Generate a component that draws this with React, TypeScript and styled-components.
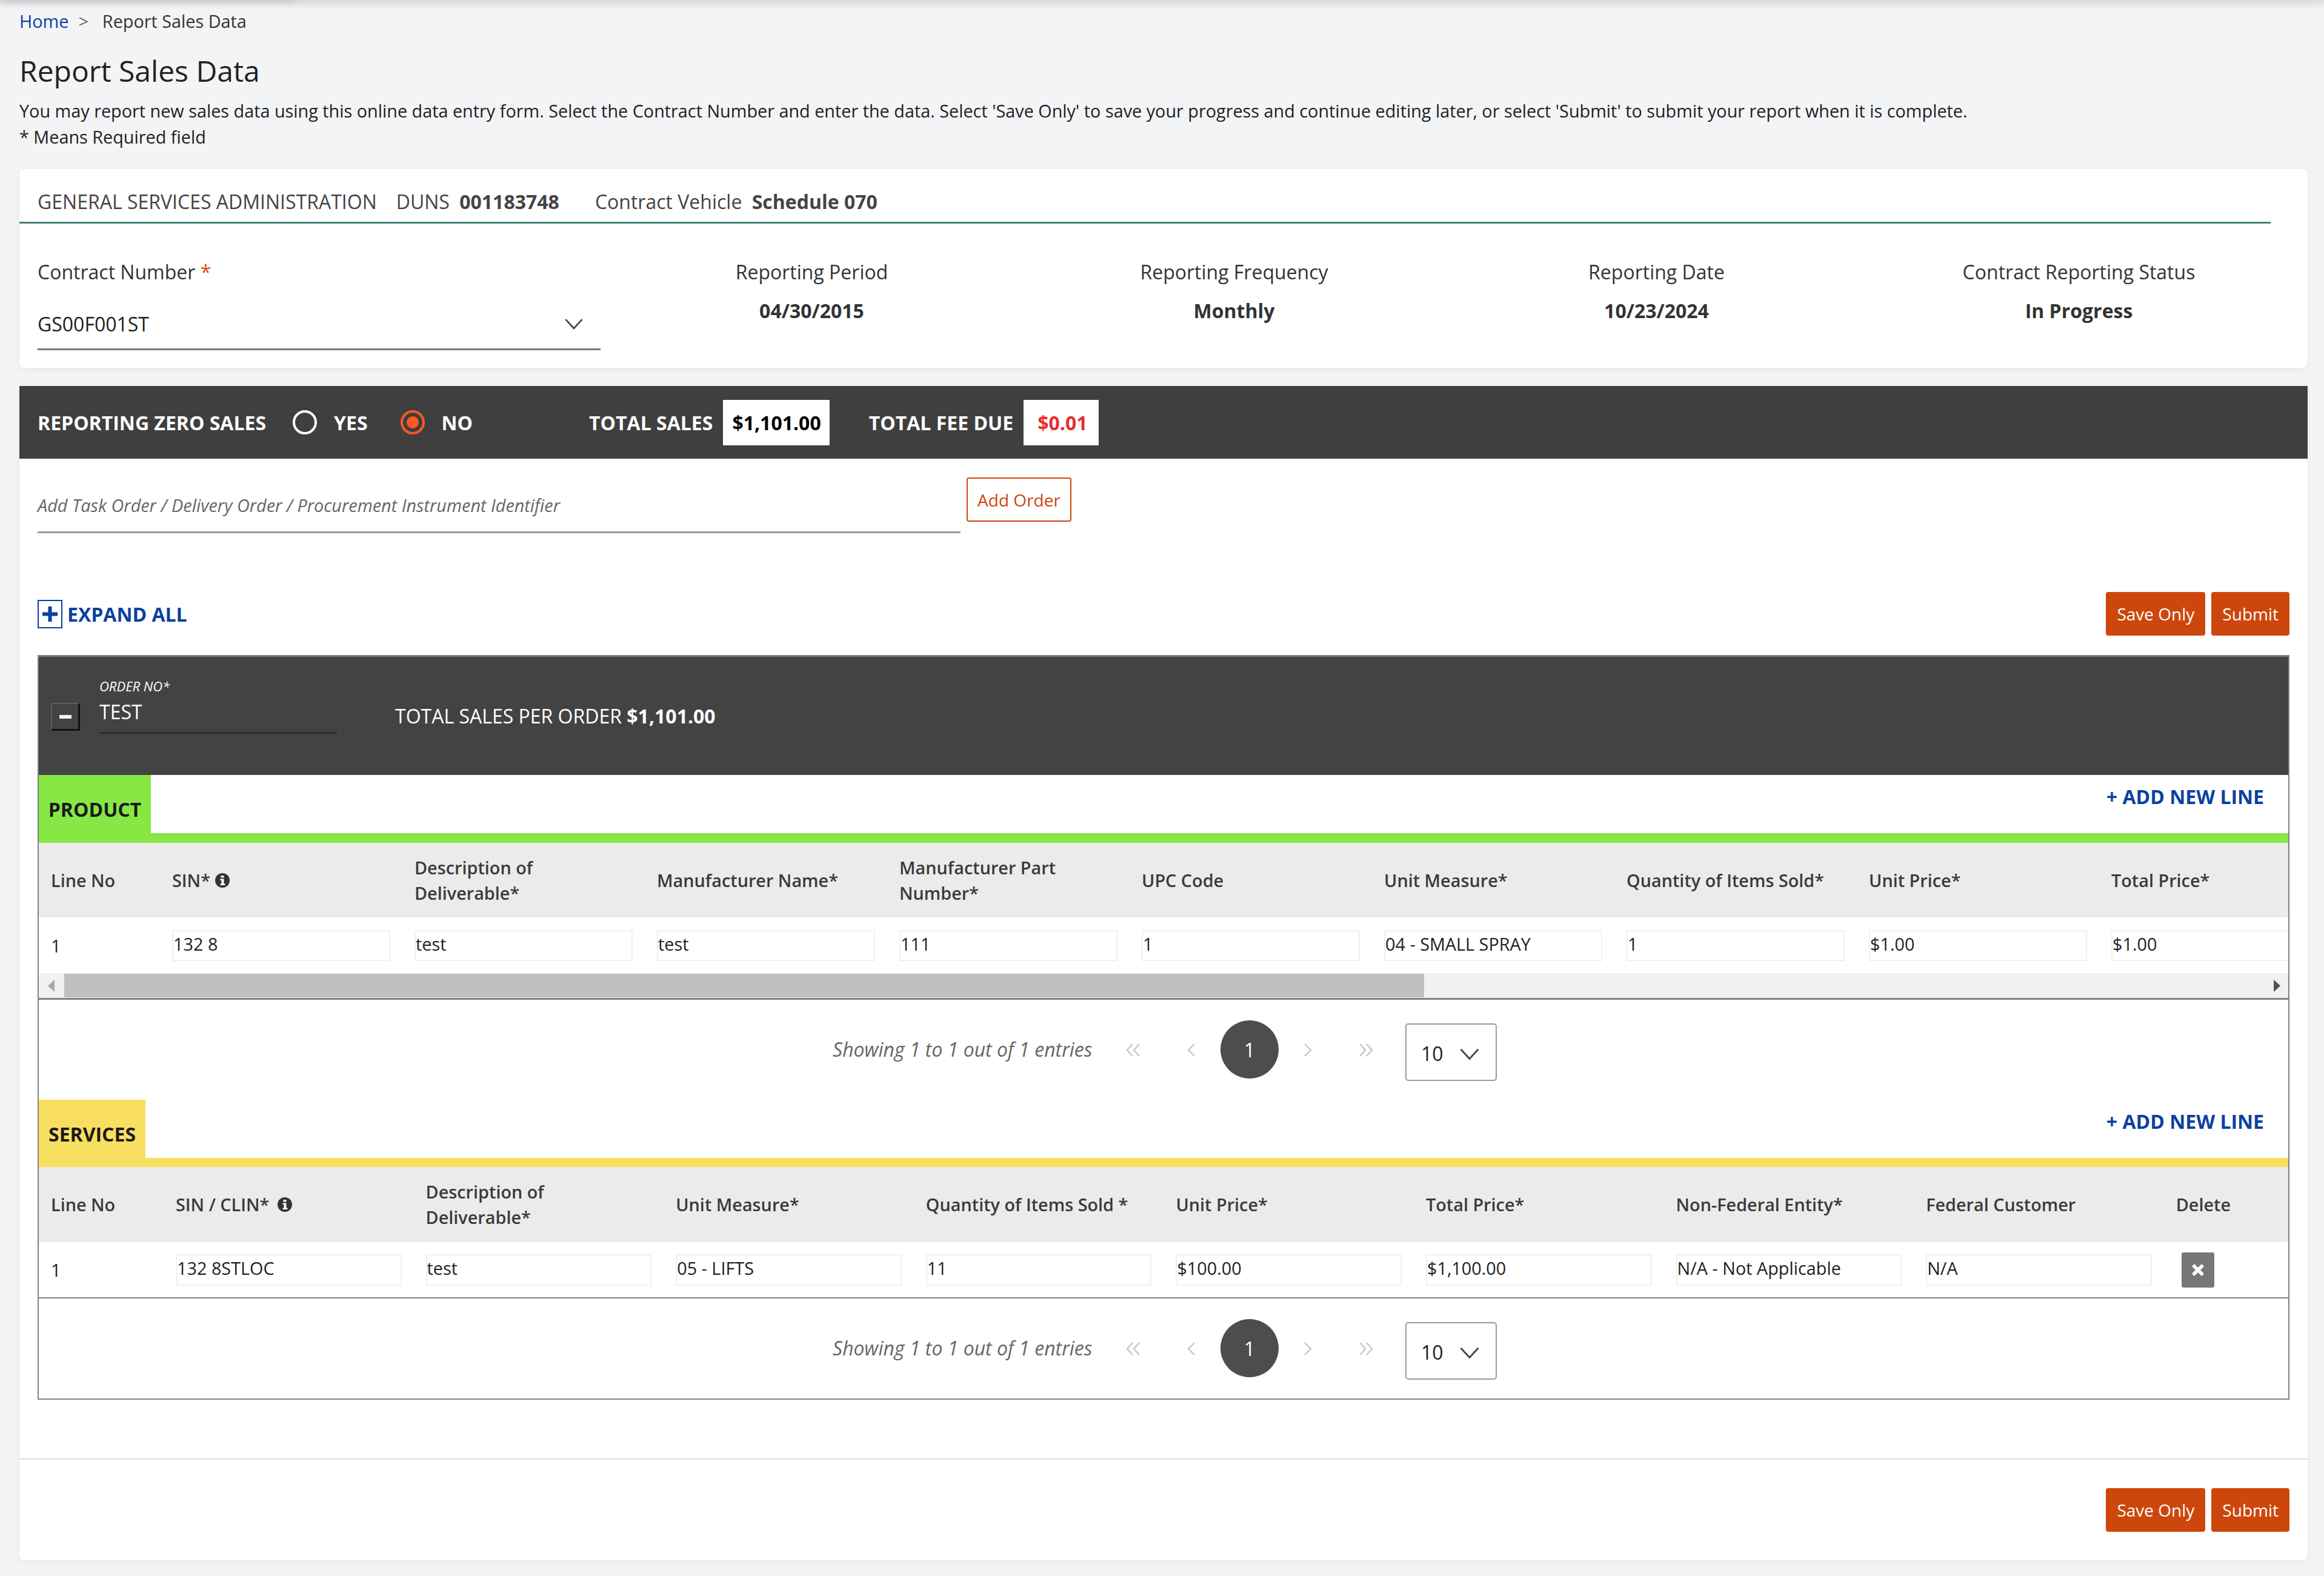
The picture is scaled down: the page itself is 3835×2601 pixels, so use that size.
import React from 'react';
import styled, { createGlobalStyle } from 'styled-components';

const GlobalStyle = createGlobalStyle`
  html, body {
    margin: 0;
    padding: 0;
    background: #f3f4f6;
  }
  body {
    font-family: "Open Sans", "Noto Sans", sans-serif;
    font-size: 28.8px;
    color: #212121;
  }
  * {
    box-sizing: border-box;
  }
`;

const blue = '#0a419f';
const orange = '#cd470d';

const productColumns = [
  { title: 'SIN*', value: '132 8', info: 8 },
  { title: 'Description of Deliverable*', value: 'test' },
  { title: 'Manufacturer Name*', value: 'test' },
  { title: 'Manufacturer Part Number*', value: '111' },
  { title: 'UPC Code', value: '1' },
  { title: 'Unit Measure*', value: '04 - SMALL SPRAY' },
  { title: 'Quantity of Items Sold*', value: '1' },
  { title: 'Unit Price*', value: '$1.00' },
  { title: 'Total Price*', value: '$1.00' },
];

const serviceColumns = [
  { title: 'SIN / CLIN*', value: '132 8STLOC', info: 14 },
  { title: 'Description of Deliverable*', value: 'test' },
  { title: 'Unit Measure*', value: '05 - LIFTS' },
  { title: 'Quantity of Items Sold *', value: '11' },
  { title: 'Unit Price*', value: '$100.00' },
  { title: 'Total Price*', value: '$1,100.00' },
  { title: 'Non-Federal Entity*', value: 'N/A - Not Applicable' },
  { title: 'Federal Customer', value: 'N/A' },
];

const summaries = [
  { label: 'Reporting Period', value: '04/30/2015' },
  { label: 'Reporting Frequency', value: 'Monthly' },
  { label: 'Reporting Date', value: '10/23/2024' },
  { label: 'Contract Reporting Status', value: 'In Progress' },
];

function Chevron({ size = 34 }: { size?: number }) {
  return (
    <svg width={size} height={size} viewBox="0 0 30 30" fill="none" stroke="#444" strokeWidth="2.4">
      <path d="M3 9 L15 22 L27 9" />
    </svg>
  );
}

function InfoIcon({ gap }: { gap: number }) {
  return (
    <InfoWrap $gap={gap}>
      <svg width="24" height="24" viewBox="0 0 24 24">
        <circle cx="12" cy="12" r="12" fill="#333" />
        <path d="M9.500 4h5v3.500h-5zM8.500 9.500h6v8h2V20h-8v-2.500h2v-5.500h-2z" fill="#fff" />
      </svg>
    </InfoWrap>
  );
}

function PagerIcon({ d }: { d: string }) {
  return (
    <PagerArrow>
      <svg width="26" height="26" viewBox="0 0 26 26" fill="none" stroke="#c6c6c6" strokeWidth="2.4">
        <path d={d} />
      </svg>
    </PagerArrow>
  );
}

function Pager() {
  return (
    <PagerRow>
      <PagerText>Showing 1 to 1 out of 1 entries</PagerText>
      <PagerIcon d="M12 3 L3 13 L12 23 M23 3 L14 13 L23 23" />
      <PagerIcon d="M18 3 L8 13 L18 23" />
      <PagerCurrent>1</PagerCurrent>
      <PagerIcon d="M8 3 L18 13 L8 23" />
      <PagerIcon d="M3 3 L12 13 L3 23 M14 3 L23 13 L14 23" />
      <PageSize>
        10
        <Chevron size={36} />
      </PageSize>
    </PagerRow>
  );
}

function Actions() {
  return (
    <ActionRow>
      <OrangeButton>Save Only</OrangeButton>
      <OrangeButton>Submit</OrangeButton>
    </ActionRow>
  );
}

export default function App() {
  return (
    <>
      <GlobalStyle />
      <TopShadow />
      <Page>
        <Breadcrumb>
          <HomeLink>Home</HomeLink>
          <Crumb>&gt;</Crumb>
          <span>Report Sales Data</span>
        </Breadcrumb>
        <Title>Report Sales Data</Title>
        <Intro>
          You may report new sales data using this online data entry form. Select the Contract Number and enter the
          data. Select 'Save Only' to save your progress and continue editing later, or select 'Submit' to submit your
          report when it is complete.
          <br />* Means Required field
        </Intro>

        <ContractCard>
          <VendorRow>
            <span>GENERAL SERVICES ADMINISTRATION</span>
            <span>
              DUNS <b>001183748</b>
            </span>
            <VehicleText>
              Contract Vehicle <b>Schedule 070</b>
            </VehicleText>
          </VendorRow>
          <ContractRow>
            <ContractField>
              <FieldLabel>
                Contract Number <Required>*</Required>
              </FieldLabel>
              <ContractSelect>
                GS00F001ST
                <Chevron />
              </ContractSelect>
            </ContractField>
            <SummaryGrid>
              {summaries.map((item) => (
                <SummaryCell key={item.label}>
                  <FieldLabel>{item.label}</FieldLabel>
                  <SummaryValue>{item.value}</SummaryValue>
                </SummaryCell>
              ))}
            </SummaryGrid>
          </ContractRow>
        </ContractCard>

        <ReportCard>
          <TotalsBar>
            <TotalsLabel>REPORTING ZERO SALES</TotalsLabel>
            <Radio />
            <RadioLabel>YES</RadioLabel>
            <Radio $checked />
            <RadioLabel>NO</RadioLabel>
            <TotalsLabel $gap={192}>TOTAL SALES</TotalsLabel>
            <TotalBox>$1,101.00</TotalBox>
            <TotalsLabel $gap={65}>TOTAL FEE DUE</TotalsLabel>
            <TotalBox $alert>$0.01</TotalBox>
          </TotalsBar>

          <CardBody>
            <AddOrderRow>
              <OrderInput>Add Task Order / Delivery Order / Procurement Instrument Identifier</OrderInput>
              <AddOrderButton>Add Order</AddOrderButton>
            </AddOrderRow>

            <ExpandRow>
              <ExpandLink>
                <PlusBox>
                  <svg width="27" height="27" viewBox="0 0 27 27">
                    <path d="M10.500 1h6v9.500H26v6h-9.500V26h-6v-9.500H1v-6h9.500z" fill={blue} />
                  </svg>
                </PlusBox>
                EXPAND ALL
              </ExpandLink>
              <Actions />
            </ExpandRow>

            <OrderBox>
              <OrderHead>
                <MinusButton>
                  <span />
                </MinusButton>
                <OrderField>
                  <OrderLabel>ORDER NO*</OrderLabel>
                  <OrderValue>TEST</OrderValue>
                </OrderField>
                <OrderTotal>
                  TOTAL SALES PER ORDER <b>$1,101.00</b>
                </OrderTotal>
              </OrderHead>

              <SectionHead>
                <SectionTab $color="#87e745" $width={185}>PRODUCT</SectionTab>
                <AddLine>+ ADD NEW LINE</AddLine>
              </SectionHead>
              <SectionRule $color="#87e745" $height={16} />
              <ClipRow>
                <ProductGrid $head>
                  <HeadCell>Line No</HeadCell>
                  {productColumns.map((col) => (
                    <HeadCell key={col.title}>
                      <HeadText $limit={col.title.length > 20 && col.title !== 'Quantity of Items Sold*'}>
                        {col.title}
                      </HeadText>
                      {col.info && <InfoIcon gap={col.info} />}
                    </HeadCell>
                  ))}
                </ProductGrid>
                <ProductGrid>
                  <LineCell>1</LineCell>
                  {productColumns.map((col) => (
                    <ValueCell key={col.title}>
                      <ValueBox>{col.value}</ValueBox>
                    </ValueCell>
                  ))}
                </ProductGrid>
              </ClipRow>
              <ScrollBar>
                <ScrollArrow>
                  <svg width="14" height="20" viewBox="0 0 14 20">
                    <path d="M12 0 V20 L1 10z" fill="#a8a8a8" />
                  </svg>
                </ScrollArrow>
                <ScrollThumb />
                <ScrollArrow $right>
                  <svg width="14" height="20" viewBox="0 0 14 20">
                    <path d="M2 0 V20 L13 10z" fill="#505050" />
                  </svg>
                </ScrollArrow>
              </ScrollBar>
              <Pager />

              <SectionHead>
                <SectionTab $color="#f9df5f" $width={176}>SERVICES</SectionTab>
                <AddLine>+ ADD NEW LINE</AddLine>
              </SectionHead>
              <SectionRule $color="#f9df5f" $height={15} />
              <ServiceGrid $head>
                <HeadCell>Line No</HeadCell>
                {serviceColumns.map((col) => (
                  <HeadCell key={col.title}>
                    <HeadText $limit={col.title.startsWith('Description')}>{col.title}</HeadText>
                    {col.info && <InfoIcon gap={col.info} />}
                  </HeadCell>
                ))}
                <HeadCell>Delete</HeadCell>
              </ServiceGrid>
              <ServiceGrid>
                <LineCell>1</LineCell>
                {serviceColumns.map((col) => (
                  <ValueCell key={col.title}>
                    <ValueBox $short>{col.value}</ValueBox>
                  </ValueCell>
                ))}
                <ValueCell>
                  <DeleteButton>
                    <svg width="22" height="22" viewBox="0 0 22 22">
                      <path d="M5 1l6 6 6-6 4 4-6 6 6 6-4 4-6-6-6 6-4-4 6-6-6-6z" fill="#fff" />
                    </svg>
                  </DeleteButton>
                </ValueCell>
              </ServiceGrid>
              <SectionLine />
              <Pager />
            </OrderBox>

            <CardDivider />
            <FootRow>
              <Actions />
            </FootRow>
          </CardBody>
        </ReportCard>
      </Page>
    </>
  );
}

/* header above the fold only leaves its shadow at the top of the shot */
const TopShadow = styled.div`
  position: relative;
  height: 0;
  box-shadow: 0 0 14px 3px rgba(0, 0, 0, 0.28);

  &::before {
    content: '';
    position: absolute;
    top: 0;
    left: 0;
    width: 485px;
    height: 0;
    box-shadow: 0 0 10px 3px rgba(0, 0, 0, 0.12);
  }
`;

const Page = styled.main`
  padding: 14px 27px 26px 32px;
`;

const Breadcrumb = styled.nav`
  display: flex;
  align-items: center;
  height: 40px;
  color: #333;
`;

const HomeLink = styled.span`
  color: ${blue};
`;

const Crumb = styled.span`
  margin: 0 23px 0 16px;
  color: #666;
`;

const Title = styled.h1`
  margin: 31px 0 0;
  font-size: 48px;
  line-height: 64px;
  font-weight: 400;
  color: #222;
`;

const Intro = styled.p`
  margin: 12px 0 0;
  line-height: 43px;
`;

const ContractCard = styled.section`
  margin-top: 32px;
  height: 328px;
  background: #fff;
  border-radius: 8px;
  box-shadow: 0 2px 8px rgba(0, 0, 0, 0.06);
`;

const VendorRow = styled.div`
  display: flex;
  align-items: center;
  gap: 32px;
  width: 3715px;
  height: 90px;
  padding: 20px 0 0 30px;
  border-bottom: 3px solid #41857f;
  font-size: 32px;
  color: #444;

  b {
    margin-left: 8px;
    font-weight: 700;
  }
`;

const VehicleText = styled.span`
  margin-left: 27px;
`;

const ContractRow = styled.div`
  display: flex;
  padding: 58px 29px 0 30px;
`;

const ContractField = styled.div`
  width: 929px;
  flex-shrink: 0;
`;

const FieldLabel = styled.div`
  font-size: 32px;
  line-height: 44px;
  color: #333;
`;

const Required = styled.span`
  color: #d84a1c;
`;

const ContractSelect = styled.div`
  display: flex;
  align-items: center;
  justify-content: space-between;
  height: 89px;
  margin-top: 18px;
  padding: 4px 27px 0 0;
  border-bottom: 3px solid #777;
  font-size: 32px;
`;

const SummaryGrid = styled.div`
  flex: 1;
  display: grid;
  grid-template-columns: repeat(4, 1fr);
`;

const SummaryCell = styled.div`
  text-align: center;
`;

const SummaryValue = styled.div`
  margin-top: 20px;
  font-size: 32px;
  line-height: 44px;
  font-weight: 700;
  color: #333;
`;

const ReportCard = styled.section`
  margin-top: 30px;
  background: #fff;
  border-radius: 0 0 8px 8px;
  box-shadow: 0 2px 8px rgba(0, 0, 0, 0.06);
`;

const TotalsBar = styled.div`
  display: flex;
  align-items: center;
  height: 120px;
  padding-left: 30px;
  background: #3f3f3f;
  color: #fff;
  font-size: 32px;
  font-weight: 700;
`;

const TotalsLabel = styled.span<{ $gap?: number }>`
  margin-left: ${(p) => p.$gap ?? 0}px;
`;

const Radio = styled.span<{ $checked?: boolean }>`
  position: relative;
  width: 40px;
  height: 40px;
  margin-left: ${(p) => (p.$checked ? 54 : 44)}px;
  border-radius: 50%;
  border: 4px solid ${(p) => (p.$checked ? '#ff5722' : '#fff')};

  &::after {
    content: '';
    display: ${(p) => (p.$checked ? 'block' : 'none')};
    position: absolute;
    inset: 6px;
    border-radius: 50%;
    background: #ff5722;
  }
`;

const RadioLabel = styled.span`
  margin-left: 28px;
`;

const TotalBox = styled.span<{ $alert?: boolean }>`
  display: flex;
  align-items: center;
  height: 75px;
  margin-left: 17px;
  padding: ${(p) => (p.$alert ? '0 18px 0 23px' : '0 14px 0 15px')};
  background: #fff;
  color: ${(p) => (p.$alert ? '#e92b2d' : '#000')};
`;

const CardBody = styled.div`
  padding: 0 30px 47px;
`;

const AddOrderRow = styled.div`
  display: flex;
  align-items: flex-start;
  gap: 10px;
  padding-top: 31px;
`;

const OrderInput = styled.div`
  width: 1523px;
  height: 92px;
  padding-top: 26px;
  border-bottom: 3px solid #999;
  line-height: 40px;
  font-style: italic;
  color: #666;
`;

const AddOrderButton = styled.div`
  display: flex;
  align-items: center;
  justify-content: center;
  width: 173px;
  height: 73px;
  border: 2px solid ${orange};
  border-radius: 4px;
  font-size: 28px;
  color: ${orange};
`;

const ExpandRow = styled.div`
  display: flex;
  align-items: center;
  justify-content: space-between;
  margin-top: 97px;
  height: 72px;
`;

const ExpandLink = styled.div`
  display: flex;
  align-items: center;
  gap: 8px;
  font-size: 32px;
  font-weight: 700;
  color: ${blue};
`;

const PlusBox = styled.span`
  display: flex;
  align-items: center;
  justify-content: center;
  width: 41px;
  height: 47px;
  border: 2px solid ${blue};
`;

const ActionRow = styled.div`
  display: flex;
  gap: 10px;
`;

const OrangeButton = styled.div`
  display: flex;
  align-items: center;
  justify-content: center;
  height: 72px;
  padding: 0 18px;
  border-radius: 4px;
  background: ${orange};
  color: #fff;
  font-size: 28px;
`;

const OrderBox = styled.div`
  margin-top: 32px;
  border: 2px solid #808080;
  border-top-width: 3px;
`;

const OrderHead = styled.div`
  display: flex;
  align-items: center;
  height: 195px;
  padding-left: 20px;
  background: #434343;
  color: #fff;
`;

const MinusButton = styled.div`
  display: flex;
  align-items: center;
  justify-content: center;
  width: 48px;
  height: 46px;
  margin-top: 3px;
  border-style: solid;
  border-width: 2px 3px 3px 2px;
  border-color: #5c5c5c #111 #111 #5c5c5c;

  span {
    width: 20px;
    height: 6px;
    background: #f3f3f3;
  }
`;

const OrderField = styled.div`
  width: 392px;
  margin: 0 96px 34px 32px;
`;

const OrderLabel = styled.div`
  font-size: 22px;
  line-height: 26px;
  font-style: italic;
`;

const OrderValue = styled.div`
  height: 66px;
  padding-top: 8px;
  border-bottom: 3px solid #2b2b2b;
  font-size: 32px;
  line-height: 44px;
`;

const OrderTotal = styled.div`
  font-size: 32px;

  b {
    font-weight: 700;
  }
`;

const SectionHead = styled.div`
  display: flex;
  justify-content: space-between;
  height: 96px;
  background: #fff;
`;

const SectionTab = styled.div<{ $color: string; $width: number }>`
  display: flex;
  align-items: flex-end;
  justify-content: center;
  width: ${(p) => p.$width}px;
  padding-bottom: 18px;
  background: ${(p) => p.$color};
  font-size: 32px;
  font-weight: 700;
  color: #1a1a1a;
`;

const AddLine = styled.div`
  padding: 14px 40px 0 0;
  font-size: 32px;
  font-weight: 700;
  color: ${blue};
`;

const SectionRule = styled.div<{ $color: string; $height: number }>`
  height: ${(p) => p.$height}px;
  background: ${(p) => p.$color};
`;

const ClipRow = styled.div`
  overflow: hidden;
`;

const ProductGrid = styled.div<{ $head?: boolean }>`
  display: grid;
  grid-template-columns: 200px repeat(9, 400px);
  width: 3800px;
  height: ${(p) => (p.$head ? 123 : 92)}px;
  background: ${(p) => (p.$head ? '#ebebeb' : '#fff')};
`;

const ServiceGrid = styled.div<{ $head?: boolean }>`
  display: grid;
  grid-template-columns: 206px repeat(8, 412.6px) 1fr;
  height: ${(p) => (p.$head ? 124 : 91)}px;
  background: ${(p) => (p.$head ? '#ebebeb' : '#fff')};
`;

const HeadCell = styled.div`
  display: flex;
  align-items: center;
  padding: 0 20px;
  line-height: 42px;
  font-weight: 600;
  color: #3a3a3a;
`;

const HeadText = styled.span<{ $limit?: boolean }>`
  max-width: ${(p) => (p.$limit ? '300px' : 'none')};
`;

const InfoWrap = styled.span<{ $gap: number }>`
  display: flex;
  margin-left: ${(p) => p.$gap}px;
`;

const LineCell = styled.div`
  display: flex;
  align-items: center;
  padding: 0 20px;
`;

const ValueCell = styled.div`
  display: flex;
  align-items: center;
  padding: 0 20px;
`;

const ValueBox = styled.div<{ $short?: boolean }>`
  display: flex;
  align-items: center;
  width: 100%;
  height: ${(p) => (p.$short ? 52 : 51)}px;
  padding: 0 0 6px;
  border: 2px solid #f0f0f0;
  white-space: nowrap;
`;

const ScrollBar = styled.div`
  display: flex;
  height: 44px;
  padding: 1px 0 1px;
  border-bottom: 3px solid #808080;
  background: #f1f1f1;
`;

const ScrollArrow = styled.div<{ $right?: boolean }>`
  display: flex;
  align-items: center;
  justify-content: ${(p) => (p.$right ? 'flex-end' : 'center')};
  width: 42px;
  margin-left: ${(p) => (p.$right ? 'auto' : 0)};
  padding-right: ${(p) => (p.$right ? 12 : 0)}px;
`;

const ScrollThumb = styled.div`
  width: 2244px;
  background: #bfbfbf;
`;

const PagerRow = styled.div`
  display: flex;
  align-items: flex-start;
  height: 165px;
  padding: 34px 0 0 1310px;
  background: #fff;
`;

const PagerText = styled.span`
  width: 448px;
  margin-top: 28px;
  font-size: 32px;
  line-height: 40px;
  font-style: italic;
  white-space: nowrap;
  color: #666;
`;

const PagerArrow = styled.span`
  display: flex;
  justify-content: center;
  width: 26px;
  margin: 36px 35px 0;
`;

const PagerCurrent = styled.span`
  display: flex;
  align-items: center;
  justify-content: center;
  width: 96px;
  height: 96px;
  border-radius: 50%;
  background: #4d4d4d;
  color: #fff;
  font-size: 32px;
`;

const PageSize = styled.span`
  display: flex;
  align-items: center;
  gap: 25px;
  width: 151px;
  height: 95px;
  margin: 5px 0 0 17px;
  padding: 4px 0 0 24px;
  border: 2px solid #9a9a9a;
  border-radius: 5px;
  font-size: 32px;
`;

const SectionLine = styled.div`
  height: 2px;
  background: #808080;
`;

const DeleteButton = styled.div`
  display: flex;
  align-items: center;
  justify-content: center;
  width: 54px;
  height: 58px;
  margin-left: 9px;
  border-radius: 3px;
  background: #777;
`;

const CardDivider = styled.div`
  height: 2px;
  margin: 97px -30px 0;
  background: #dcdcdc;
`;

const FootRow = styled.div`
  display: flex;
  justify-content: flex-end;
  margin-top: 47px;
`;
